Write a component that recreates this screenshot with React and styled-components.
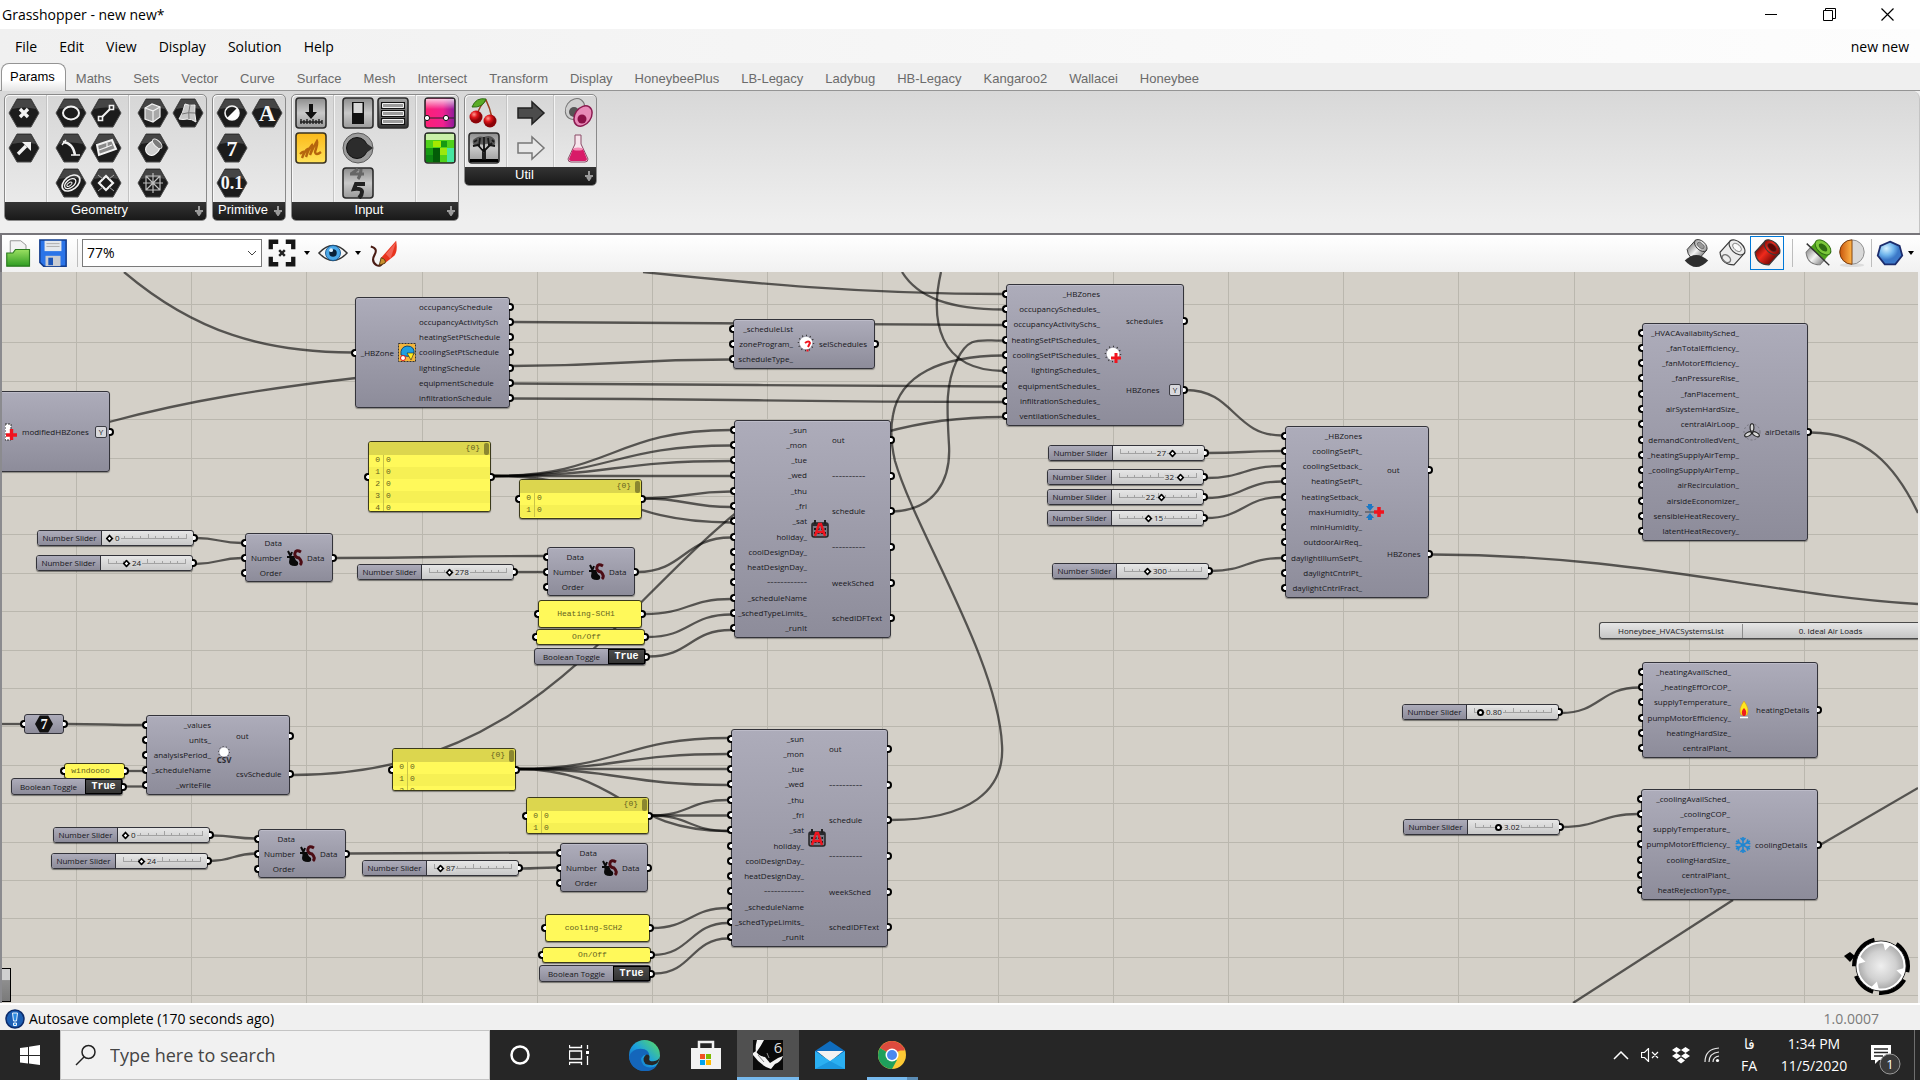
import React from "react";
import styled, { createGlobalStyle, css } from "styled-components";

const UI = '"Open Sans", "Noto Sans", sans-serif';
const ARIAL = '"Liberation Sans", Arial, sans-serif';
const MONO = '"Liberation Mono", "Courier New", monospace';
const WIRE = "rgba(0, 0, 0, 0.6)";

/* World position of the canvas viewport's top left corner. */
const ORIGIN = { x: 2, y: 272 };
const GRID = 1152 / 30;

const Global = createGlobalStyle`
  * { box-sizing: border-box; }
  body { margin: 0; font-family: ${UI}; color: #000; overflow: hidden; }
  button, input, select { font: inherit; color: inherit; margin: 0; }
  button { border: 0; background: none; padding: 0; }
  svg { display: block; }
`;

const Window = styled.div`
  display: flex;
  flex-direction: column;
  height: 100vh;
  background: #f0f0f0;
`;

/* ---------- title and menu ---------- */
const TitleBar = styled.header`
  display: flex;
  align-items: center;
  justify-content: space-between;
  height: 29px;
  padding: 0 4px 0 2px;
  background: #fff;
  font-size: 14px;
`;
const Title = styled.h1`
  margin: 0;
  font-size: 14px;
  font-weight: 400;
`;
const WindowButtons = styled.div`
  display: flex;
`;
const WindowButton = styled.button`
  display: grid;
  place-items: center;
  width: 58px;
  height: 29px;
`;
const MenuBar = styled.nav`
  display: flex;
  align-items: center;
  height: 34px;
  padding: 0 11px 0 4px;
  background: linear-gradient(90deg, #f0f0f0, #fdfdfd);
  font-size: 14px;
`;
const MenuItem = styled.button`
  padding: 0 11px;
`;
const DocumentButton = styled.button`
  margin-left: auto;
`;

/* ---------- ribbon ---------- */
const TabRow = styled.div`
  display: flex;
  align-items: flex-end;
  height: 28px;
  padding-left: 1px;
  background: #efefef;
  border-bottom: 1px solid #949494;
  font-family: ${ARIAL};
  font-size: 13px;
`;
const Tab = styled.button`
  height: 26px;
  padding: 2px 12px 0 10px;
  color: #6b6b6b;
  ${(p) =>
    p.$active &&
    css`
      height: 28px;
      margin-bottom: -1px;
      padding: 0 10px 2px 8px;
      color: #000;
      background: linear-gradient(#fff 60%, #e4e4e4);
      border: 1px solid #949494;
      border-bottom: 0;
      border-radius: 8px 8px 0 0;
    `}
`;
const Ribbon = styled.section`
  display: flex;
  align-items: flex-start;
  gap: 5px;
  height: 142px;
  padding: 3px 0 0 4px;
  background: linear-gradient(#d8d8d8, #efefef 92%);
  border-right: 1px solid #c4c4c4;
  border-top-right-radius: 8px;
`;
const Group = styled.div`
  display: flex;
  flex-direction: column;
  background: linear-gradient(#d6d6d6, #ededed);
  border: 1px solid #8a8a8a;
  border-radius: 5px;
  box-shadow: inset 1px 1px 0 #f8f8f8;
  overflow: hidden;
`;
const GroupBody = styled.div`
  display: flex;
  padding: 0 1px;
`;
const IconGrid = styled.div`
  display: grid;
  grid-template-columns: repeat(${(p) => p.$cols}, 35px);
  grid-auto-rows: 35px;
  min-height: ${(p) => p.$rows * 35 + 2}px;
  align-content: start;
  & + & {
    margin-left: 5px;
    padding-left: 6px;
    border-left: 1px solid #c4c4c4;
    box-shadow: inset 1px 0 0 #f4f4f4;
  }
`;
const IconButton = styled.button`
  display: grid;
  place-items: center;
  grid-column: ${(p) => p.$col || "auto"};
`;
const GroupTitle = styled.div`
  position: relative;
  height: 18px;
  background: linear-gradient(#343434, #191919);
  color: #fff;
  font-family: ${ARIAL};
  font-size: 13px;
  line-height: 16px;
  text-align: center;
  padding-right: 12px;
  svg {
    position: absolute;
    right: 2px;
    top: 4px;
  }
`;

/* ---------- canvas toolbar ---------- */
const Toolbar = styled.div`
  display: flex;
  align-items: center;
  height: 39px;
  padding: 0 4px 2px 2px;
  background: linear-gradient(#fff, #f1f1f1);
  border-top: 2px solid #77757a;
  border-left: 2px solid #77757a;
`;
const Tool = styled.button`
  display: grid;
  place-items: center;
  width: ${(p) => p.$w || 34}px;
  height: 34px;
  border: 1px solid ${(p) => (p.$active ? "#0078d7" : "transparent")};
`;
const Divider = styled.span`
  width: 1px;
  height: 28px;
  margin: 0 ${(p) => p.$gap || 4}px;
  background: #bdbdbd;
`;
const Spacer = styled.span`
  flex: 1;
`;
const ZoomBox = styled.label`
  position: relative;
  display: block;
  svg {
    position: absolute;
    right: 5px;
    top: 11px;
    pointer-events: none;
  }
`;
const ZoomSelect = styled.select`
  display: block;
  appearance: none;
  width: 180px;
  height: 28px;
  padding: 0 4px;
  border: 1px solid #7a7a7a;
  border-radius: 0;
  background: #fff;
  font-size: 14px;
`;

/* ---------- canvas ---------- */
const Canvas = styled.main`
  position: relative;
  flex: 1;
  min-height: 0;
  margin-right: 2px;
  overflow: hidden;
  background: #d4d0c8;
  border-left: 2px solid #8b8b8f;
`;
const Wires = styled.svg`
  position: absolute;
  inset: 0;
  width: 100%;
  height: 100%;
`;
const place = css`
  position: absolute;
  left: ${(p) => p.$x - ORIGIN.x}px;
  top: ${(p) => p.$y - ORIGIN.y}px;
  width: ${(p) => p.$w}px;
  height: ${(p) => p.$h}px;
`;
const NodeBox = styled.section`
  ${place}
  display: flex;
  padding: 1px 0;
  border: 1px solid #33333a;
  border-radius: 3px;
  background: linear-gradient(#adacba, #8d8c9a);
  box-shadow: inset 0 1px 0 #bcbbc8, 0 1px 1px rgba(0, 0, 0, 0.35);
  font-size: 8px;
  line-height: 10px;
  color: #17171b;
`;
const Column = styled.div`
  display: flex;
  flex-direction: column;
  width: ${(p) => p.$w}px;
  flex: ${(p) => (p.$w ? "none" : 1)};
`;
const Slot = styled.div`
  position: relative;
  flex: 1;
  display: flex;
  align-items: center;
  justify-content: ${(p) => (p.$side === "in" ? "flex-end" : "flex-start")};
  white-space: nowrap;
  ${(p) =>
    p.$rule &&
    css`
      font-family: ${ARIAL};
      font-size: 10px;
      color: #44444c;
    `}
`;
const Port = styled.span`
  position: absolute;
  top: 50%;
  width: 5px;
  height: 8px;
  margin-top: -4px;
  background: #fff;
  border: 2px solid #000;
  ${(p) =>
    p.$side === "in"
      ? css`
          left: -5px;
          border-right: 0;
          border-radius: 4px 0 0 4px;
        `
      : css`
          right: -5px;
          border-left: 0;
          border-radius: 0 4px 4px 0;
        `}
`;
const NodeIcon = styled.div`
  display: grid;
  place-items: center;
  width: ${(p) => p.$w}px;
`;
const Flag = styled.span`
  display: grid;
  place-items: center;
  width: 12px;
  height: 12px;
  margin: 0 2px 0 auto;
  border: 1px solid #3c3c44;
  border-radius: 2px;
  background: #d8d8dc;
  font-size: 8px;
  line-height: 8px;
`;

const SliderBox = styled.label`
  ${place}
  display: flex;
  border: 1px solid #33333a;
  border-radius: 3px;
  background: linear-gradient(#e6e6e6, #c9c9c9);
  box-shadow: 0 1px 1px rgba(0, 0, 0, 0.45);
  font-size: 8px;
  line-height: 14px;
  color: #17171b;
`;
const PartName = styled.span`
  width: ${(p) => p.$w}px;
  border-right: 1px solid #33333a;
  border-radius: 2px 0 0 2px;
  background: linear-gradient(#adacba, #8d8c9a);
  text-align: center;
  white-space: nowrap;
`;
const Track = styled.span`
  position: relative;
  width: 84px;
  margin-left: 4px;
  svg {
    position: absolute;
    left: 3px;
    top: 2px;
  }
`;
const Range = styled.input`
  position: absolute;
  inset: 0;
  width: 84px;
  height: 14px;
  appearance: none;
  background: none;
  &::-webkit-slider-thumb {
    appearance: none;
    width: 7px;
    height: 7px;
    background: #fff;
    border: 2px solid #000;
    border-radius: ${(p) => (p.$round ? "50%" : "1px")};
    transform: ${(p) => (p.$round ? "none" : "rotate(45deg) scale(0.8)")};
  }
`;
const Readout = styled.output`
  position: absolute;
  top: 0;
  padding: 0 1px;
  background: linear-gradient(transparent 3px, #dadada 3px, #d4d4d4 11px, transparent 11px);
`;

const NoteBox = styled.section`
  ${place}
  border: 1px solid #3b3a1c;
  border-radius: 3px;
  background: #fff95a;
  box-shadow: 0 1px 1px rgba(0, 0, 0, 0.4);
  font-family: ${MONO};
  font-size: 8px;
  color: #64621f;
`;
const NoteText = styled.p`
  display: grid;
  place-items: center;
  height: 100%;
  margin: 0;
  padding: 0 8px 2px 0;
`;
const NoteClip = styled.div`
  height: 100%;
  overflow: hidden;
  border-radius: 2px;
`;
const NoteHead = styled.div`
  display: flex;
  justify-content: flex-end;
  height: 13px;
  padding-right: 1px;
  line-height: 12px;
  background: #dcd64e;
`;
const NoteScroll = styled.span`
  width: 5px;
  height: 12px;
  margin: 1px 0 0 4px;
  border-radius: 2px;
  background: #8b8730;
`;
const NoteRow = styled.div`
  display: flex;
  height: 12px;
  line-height: 10px;
  background: ${(p) => (p.$odd ? "#f6f054" : "#fff95a")};
`;
const NoteIndex = styled.span`
  width: 15px;
  padding-right: 3px;
  margin-right: 2px;
  border-right: 1px solid #c9c348;
  text-align: right;
`;

const ToggleBox = styled.label`
  ${place}
  display: flex;
  border: 1px solid #33333a;
  border-radius: 3px;
  background: linear-gradient(#adacba, #8d8c9a);
  box-shadow: 0 1px 1px rgba(0, 0, 0, 0.45);
  font-size: 8px;
  line-height: 15px;
  color: #17171b;
`;
const ToggleName = styled.span`
  flex: 1;
  text-align: center;
  white-space: nowrap;
`;
const ToggleButton = styled.button`
  width: 37px;
  border: 1px solid #000;
  background: linear-gradient(#4c4c4c, #333);
  font-family: ${MONO};
  font-weight: 700;
  font-size: 10px;
  line-height: 11px;
  color: #fff;
`;
const ListBox = styled.label`
  ${place}
  display: flex;
  align-items: center;
  border: 1px solid #4a4a4a;
  border-right: 0;
  border-radius: 3px 0 0 3px;
  background: linear-gradient(#e6e6e6, #c6c6c6);
  box-shadow: 0 1px 1px rgba(0, 0, 0, 0.45);
  font-size: 8px;
  color: #17171b;
`;
const ListName = styled.span`
  width: 143px;
  text-align: center;
  border-right: 1px solid #8c8c8c;
  line-height: 14px;
`;
const ListSelect = styled.select`
  appearance: none;
  flex: 1;
  border: 0;
  background: none;
  text-align: center;
  text-align-last: center;
`;
const ParamBox = styled.section`
  ${place}
  display: grid;
  place-items: center;
  border: 1px solid #33333a;
  border-radius: 3px;
  background: linear-gradient(#adacba, #8d8c9a);
`;
const CornerTab = styled.div`
  ${place}
  border: 1px solid #000;
  background: linear-gradient(#d0d0d0 35%, #8e8e8e 36%, #7a7a7a);
`;
const Compass = styled.svg`
  position: absolute;
  right: 7px;
  bottom: 6px;
`;

/* ---------- status bar and taskbar ---------- */
const StatusBar = styled.footer`
  display: flex;
  align-items: center;
  height: 27px;
  padding: 2px 41px 0 5px;
  gap: 4px;
  background: #f0f0f0;
  border-top: 2px solid #fff;
  font-size: 14px;
`;
const Version = styled.span`
  margin-left: auto;
  color: #7b7b7b;
`;
const Taskbar = styled.footer`
  display: flex;
  height: 50px;
  background: #262626;
  color: #fff;
`;
const TaskButton = styled.button`
  position: relative;
  display: grid;
  place-items: center;
  width: ${(p) => p.$w || 62}px;
  margin-left: ${(p) => p.$gap || 0}px;
  background: ${(p) => (p.$active ? "#505050" : "none")};
  border-bottom: ${(p) => (p.$active ? "3px solid #76b9ed" : "0")};
  padding-top: ${(p) => (p.$active ? 3 : 0)}px;
`;
const NoticeButton = styled.button`
  display: flex;
  align-items: center;
  width: 52px;
  margin-left: 6px;
  padding: 8px 0 0 7px;
`;
const RunningMark = styled.span`
  position: absolute;
  left: 6px;
  bottom: 0;
  width: 51px;
  height: 3px;
  background: linear-gradient(90deg, #76b9ed 40px, #5a8bb3 40px);
`;
const Search = styled.label`
  display: flex;
  align-items: center;
  gap: 13px;
  width: 430px;
  padding-left: 14px;
  background: #f1f1f1;
  border: 1px solid #c4c4c4;
`;
const SearchInput = styled.input`
  flex: 1;
  min-width: 0;
  padding: 0;
  border: 0;
  background: none;
  font-size: 18px;
  outline: 0;
  &::placeholder {
    color: #444;
    opacity: 1;
  }
`;
const TrayText = styled.div`
  display: flex;
  flex-direction: column;
  justify-content: center;
  width: ${(p) => p.$w}px;
  margin-left: ${(p) => p.$gap}px;
  text-align: center;
  font-size: 14px;
  line-height: 22px;
`;
const ShowDesktop = styled.button`
  width: 6px;
  border-left: 1px solid #6e6e6e;
`;

/* ---------- drawings ---------- */
const Hex = ({ children }) => (
  <svg width="32" height="30" viewBox="0 0 32 30" aria-hidden="true">
    <path d="M9 1h14l8 14-8 14H9L1 15z" fill="#1c1c1c" stroke="#4a4a4a" />
    <path d="M9 2h14l5 9Q16 8 4 11z" fill="#454545" />
    <g fill="none" stroke="#f2f2f2" strokeWidth="2">
      {children}
    </g>
  </svg>
);
const HexText = ({ size, children }) => (
  <text x="16" y={15 + size * 0.36} fontSize={size} fill="#f6f6f6" stroke="none" textAnchor="middle" fontFamily="Liberation Serif, serif" fontWeight="700">
    {children}
  </text>
);
const Tile = ({ fill = "url(#tileGrey)", stroke = "#2c2c2c", children }) => (
  <svg width="32" height="32" viewBox="0 0 32 32" aria-hidden="true">
    <rect x="1" y="1" width="30" height="30" rx="3" fill={fill} stroke={stroke} strokeWidth="1.6" />
    {children}
  </svg>
);
const Plain = ({ size = 32, children }) => (
  <svg width={size} height={size} viewBox="0 0 32 32" aria-hidden="true">
    {children}
  </svg>
);
const Defs = () => (
  <svg width="0" height="0" style={{ position: "absolute" }} aria-hidden="true">
    <defs>
      <linearGradient id="tileGrey" x2="0" y2="1"><stop stopColor="#8d8d8d" /><stop offset=".5" stopColor="#c9c9c9" /><stop offset="1" stopColor="#9a9a9a" /></linearGradient>
      <linearGradient id="tileDark" x2="0" y2="1"><stop stopColor="#a8a8a8" /><stop offset="1" stopColor="#333" /></linearGradient>
      <linearGradient id="tileGold" x2="0" y2="1"><stop stopColor="#fbb919" /><stop offset="1" stopColor="#ffe259" /></linearGradient>
      <linearGradient id="tilePink"><stop stopColor="#ff1f74" /><stop offset=".6" stopColor="#f0218f" /><stop offset="1" stopColor="#8a1a9c" /></linearGradient>
      <linearGradient id="pinkFade" x2="0" y2="1"><stop stopColor="#fff" stopOpacity=".75" /><stop offset=".6" stopColor="#fff" stopOpacity="0" /></linearGradient>
      <linearGradient id="folder" x2="0" y2="1"><stop stopColor="#9be062" /><stop offset="1" stopColor="#2f9c22" /></linearGradient>
      <linearGradient id="silver"><stop stopColor="#9a9a9a" /><stop offset=".5" stopColor="#f4f4f4" /><stop offset="1" stopColor="#8f8f8f" /></linearGradient>
      <linearGradient id="redCyl"><stop stopColor="#8c0e08" /><stop offset=".4" stopColor="#f02a1c" /><stop offset="1" stopColor="#7c0805" /></linearGradient>
      <radialGradient id="cherry" cx=".35" cy=".3"><stop stopColor="#ff9a90" /><stop offset=".5" stopColor="#e0161a" /><stop offset="1" stopColor="#8c0308" /></radialGradient>
      <radialGradient id="gem" cx=".35" cy=".3"><stop stopColor="#d6f2ff" /><stop offset=".6" stopColor="#6fb4ec" /><stop offset="1" stopColor="#3b78c8" /></radialGradient>
      <radialGradient id="knob"><stop stopColor="#efefef" /><stop offset=".6" stopColor="#d0d0d0" /><stop offset="1" stopColor="#a2a2a2" /></radialGradient>
      <linearGradient id="edge" x1="0" y1="1" x2="1" y2="0"><stop stopColor="#0f5fb8" /><stop offset=".5" stopColor="#1ba0e0" /><stop offset="1" stopColor="#5fe05a" /></linearGradient>
      <linearGradient id="orange"><stop stopColor="#c9560c" /><stop offset="1" stopColor="#ffb64a" /></linearGradient>
    </defs>
  </svg>
);

const ribbonIcons = {
  point: <Hex><path d="M12 11l8 8M20 11l-8 8" strokeWidth="3.4" /></Hex>,
  vector: <Hex><path d="M10 21l8-8" strokeWidth="3.4" /><path d="M14 9h9v9z" fill="#f2f2f2" stroke="none" /></Hex>,
  circle: <Hex><ellipse cx="16" cy="15" rx="8" ry="6.5" /></Hex>,
  line: <Hex><path d="M12 19l8-8" /><path d="M8.500 18.500h4v4h-4zM19.500 7.500h4v4h-4z" strokeWidth="1.600" fill="#222" /></Hex>,
  arc: <Hex><path d="M8 9q10 1 12 13" strokeWidth="2.400" /><path d="M16 22h9M7 12l4-5" strokeWidth="1.400" /></Hex>,
  plane: <Hex><path d="M7 12l15-5 4 9-17 6z" fill="#8a8a8a" strokeWidth="2" /><path d="M9 17l8-3v-4M17 14l5-2" strokeWidth="1.200" /></Hex>,
  curve: <Hex><g transform="rotate(-38 16 15)"><ellipse cx="16" cy="15" rx="10" ry="6.500" strokeWidth="1.700" /><ellipse cx="15" cy="15" rx="6.500" ry="3.800" strokeWidth="1.300" /><ellipse cx="14" cy="15" rx="3" ry="1.400" strokeWidth="1" /></g></Hex>,
  rect: <Hex><path d="M16 8l7 7-7 7-7-7z" strokeWidth="2.200" /><path d="M8 7l5 4M24 7l-5 4M8 23l5-4M24 23l-5-4" strokeWidth="1" stroke="#aaa" /></Hex>,
  box: <Hex><path d="M8 10l7-4 8 3v10l-7 5-8-3z" fill="#a8a8a8" strokeWidth="1.200" /><path d="M8 10l8 3v11M16 13l7-4" strokeWidth="1.200" /></Hex>,
  surface: <Hex><path d="M13 6q4 2 10 1-1 8 1 17-4-3-9-3-4 1-8 0 4-6 6-15z" fill="#c8c8c8" strokeWidth="1" /><path d="M18 7q-2 8-1 14M10 16q6-2 13-1" stroke="#777" strokeWidth="1" /></Hex>,
  brep: <Hex><g transform="rotate(45 16 15)"><rect x="10" y="8" width="12" height="15" rx="6" fill="#cfcfcf" stroke="#fff" strokeWidth="1" /><ellipse cx="16" cy="9" rx="6" ry="3" fill="#7a7a7a" strokeWidth="1" /></g></Hex>,
  mesh: <Hex><path d="M9 8h14v14H9zM16 5v20M6 15h20M9 8l14 14M23 8L9 22" stroke="#bdbdbd" strokeWidth="1.200" /></Hex>,
  bool: <Hex><circle cx="16" cy="15" r="7" strokeWidth="1.600" /><path d="M21 10a7 7 0 0 1-10 10z" fill="#fff" stroke="none" /></Hex>,
  text: <Hex><HexText size={23}>A</HexText></Hex>,
  int: <Hex><HexText size={22}>7</HexText></Hex>,
  num: <Hex><HexText size={18}>0.1</HexText></Hex>,
  slider: <Tile><path d="M14 7h4v8h4l-6 7-6-7h4z" fill="#111" /><path d="M5 25h22M6 22v5M9 23v4M12 22v5M15 23v4M18 22v5M21 23v4M24 22v5M27 23v4" stroke="#222" strokeWidth="1.400" /></Tile>,
  scribble: <Tile fill="url(#tileGold)" stroke="#3a3320"><path d="M5 22q3-3 4-2 0 2-2 6 3-8 6-9 0 3-2 8 3-9 6-12 1 2-2 10 4-9 7-14 1 2-2 11 1 4 6 0" fill="none" stroke="#b5650e" strokeWidth="2.400" /></Tile>,
  toggle: <Tile><rect x="10" y="5" width="12" height="22" fill="#111" /><rect x="11.500" y="6" width="9" height="10" fill="#d8d8d8" /></Tile>,
  list: <Tile fill="url(#tileDark)"><path d="M5.500 6.500h21v4h-21zM5.500 14.500h21v4h-21zM5.500 22.500h21v4h-21z" fill="#8a8a8a" stroke="#111" strokeWidth="3" /><path d="M5.500 6.500h21v4h-21zM5.500 14.500h21v4h-21zM5.500 22.500h21v4h-21z" fill="#9c9c9c" stroke="#f0f0f0" /></Tile>,
  knob: <Plain><circle cx="16" cy="16" r="15" fill="#9c9c9c" stroke="#5c5c5c" /><circle cx="15" cy="16" r="10.500" fill="#2c2c2c" stroke="#111" /><path d="M24 11l7 5-7 5z" fill="#2c2c2c" /></Plain>,
  scroller: <Tile><path d="M19 2q0 6-3 10M8 7h14M9 7l7-5" fill="none" stroke="#666" strokeWidth="3" /><path d="M23 17h-9l-2 5q8-1 8 3 0 3-3 6" fill="none" stroke="#222" strokeWidth="4" /></Tile>,
  gradient: <Tile fill="url(#tilePink)"><rect x="2" y="2" width="28" height="17" fill="url(#pinkFade)" /><path d="M2 21h28" stroke="#222" strokeWidth="1.200" /><circle cx="3" cy="21" r="2.600" fill="#fff" stroke="#111" /><circle cx="22" cy="21" r="2.600" fill="#fff" stroke="#111" /></Tile>,
  swatch: <Tile fill="#4fd21a"><path d="M2 2h28v6H2z" fill="#c9f0a8" /><path d="M9 9h8v6H9z" fill="#a5e800" /><path d="M2 16h7v7H2zM17 9h6v6h-6z" fill="#169a12" /><path d="M9 16h7v7H9zM9 23h7v7H9z" fill="#035c08" /><path d="M16 16h7v7h-7z" fill="#9be80e" /><path d="M23 16h7v14h-7z" fill="#46e6a0" /><path d="M2 23h7v7H2z" fill="#0c8212" /></Tile>,
  cherry: <Plain><path d="M9 18Q12 8 18 3q4 8 6 18" fill="none" stroke="#9a4020" strokeWidth="1.600" /><path d="M4 10Q8 0 18 2q-3 9-14 8z" fill="#5aac26" stroke="#2c6b12" /><circle cx="8" cy="20" r="6.500" fill="url(#cherry)" /><circle cx="22" cy="24" r="6.500" fill="url(#cherry)" /></Plain>,
  tree: <Tile><path d="M2 27h28v3H2z" fill="#000" /><path d="M15 28V17M17 28V17M16 20l-7-8M16 19l8-8M16 18V5M10 13l-5 1M11 14l1-8M22 13l5 1M21 13l-1-7M9 8l-3 2M24 8l2 2" stroke="#111" strokeWidth="1.800" fill="none" /><path d="M5 8q5-5 11-3 7-3 11 3 1 6-3 6-4-4-8-1-5-2-9 1-3-2-2-6z" fill="#222" opacity=".6" /></Tile>,
  arrowDark: <Plain><path d="M3 11h14V5l12 11-12 11v-6H3z" fill="#4c4c4c" stroke="#222" strokeWidth="1.500" /></Plain>,
  arrowLight: <Plain><path d="M3 11h14V5l12 11-12 11v-6H3z" fill="#e8e8e8" stroke="#777" strokeWidth="1.500" /></Plain>,
  galapagos: <Plain><ellipse cx="13" cy="12" rx="9" ry="11" fill="#cfcfcf" stroke="#777" transform="rotate(35 13 12)" /><circle cx="12" cy="15" r="5" fill="#555" /><ellipse cx="21" cy="19" rx="8" ry="11" fill="#e88ab8" stroke="#8c1b50" strokeWidth="1.500" transform="rotate(35 21 19)" /><circle cx="20" cy="22" r="4.500" fill="#8c1048" /></Plain>,
  flask: <Plain><path d="M13 3h6v9l7 15q0 3-3 3H9q-3 0-3-3l7-15z" fill="#f6e4ec" stroke="#8a4a66" /><path d="M11 17h10l4 10q0 2-2 2H9q-2 0-2-2z" fill="#d81b68" /><ellipse cx="16" cy="17" rx="5" ry="1.600" fill="#f58ab4" /></Plain>,
};

const Cylinder = ({ fill, inner }) => (
  <g transform="rotate(42 16 16)">
    <path d="M6 7v17q10 9 20 0V7z" fill={fill} stroke="#3a3a3a" strokeWidth="1.200" />
    <ellipse cx="16" cy="8" rx="10" ry="6" fill={fill} stroke="#3a3a3a" strokeWidth="1.200" />
    <ellipse cx="16" cy="8" rx="5.500" ry="3.200" fill={inner} stroke="#3a3a3a" strokeWidth=".6" />
  </g>
);
const tools = {
  open: <Plain size={28}><path d="M6 2h12l6 5v14H6z" fill="#f2f2f2" stroke="#888" /><path d="M2 16h7l3-4h16v19H2z" fill="url(#folder)" stroke="#2a7a1e" strokeWidth="1.300" /></Plain>,
  save: <Plain size={30}><path d="M2 2h28v28H6l-4-4z" fill="#2b74e8" stroke="#123c8c" strokeWidth="1.600" /><path d="M7 3h18v11H7z" fill="#e4e8ec" /><path d="M9 6h14M9 9h14" stroke="#aaa" /><path d="M8 19h16v11H8z" fill="#c9ccd2" /><path d="M11 21h5v8h-5z" fill="#1c55b8" /></Plain>,
  extents: <Plain size={30}><path d="M4 12V4h8M20 4h8v8M28 20v8h-8M12 28H4v-8" fill="none" stroke="#161616" strokeWidth="4.600" /><path d="M13 13l6 6M19 13l-6 6" stroke="#222" strokeWidth="2.600" /></Plain>,
  eye: <Plain size={30}><path d="M1 16Q16 0 31 16 16 32 1 16z" fill="#f4f4f4" stroke="#333" strokeWidth="1.600" /><circle cx="16" cy="16" r="8" fill="#4aa8e8" stroke="#1b5c94" /><circle cx="16" cy="16" r="4" fill="#0a2238" /><circle cx="14" cy="13" r="2" fill="#dff2ff" /></Plain>,
  sketch: <Plain size={30}><path d="M3 9q8 2 4 9t2 11q4 2 7-3" fill="none" stroke="#4a1c14" strokeWidth="2.200" /><path d="M14 21L30 3q2 11-2 16L18 27z" fill="#e8341e" /><path d="M19 17L30 4l-6 18z" fill="#f8827a" opacity=".6" /><path d="M14 21l-2 8 6-2q2-4-4-6z" fill="#c9902c" stroke="#5c3a10" /></Plain>,
  noPreview: <Plain size={30}><g transform="translate(4 0) scale(.8)"><Cylinder fill="url(#silver)" inner="#999" /></g><path d="M4 24Q16 12 29 24 16 38 4 24z" fill="#2e2e2e" /></Plain>,
  wirePreview: <Plain size={30}><Cylinder fill="#ececec" inner="#fafafa" /><ellipse cx="10" cy="22" rx="5" ry="3.500" transform="rotate(42 10 22)" fill="none" stroke="#777" strokeWidth="1.500" /></Plain>,
  shaded: <Plain size={30}><Cylinder fill="url(#redCyl)" inner="#5c0503" /></Plain>,
  selected: <Plain size={30}><g transform="rotate(42 16 16)"><path d="M6 16v8q10 9 20 0v-8z" fill="url(#silver)" stroke="#777" /><path d="M6 8v9h20V8z" fill="#4fa01c" /><ellipse cx="16" cy="8" rx="10" ry="6" fill="#7cc93a" stroke="#2c6b10" /><ellipse cx="16" cy="8" rx="5.500" ry="3" fill="#2c6b10" /></g><path d="M4 6l24 23" stroke="#333" strokeWidth="1.500" /></Plain>,
  sphere: <Plain size={30}><ellipse cx="16" cy="29" rx="13" ry="2" fill="#ddd" /><circle cx="16" cy="15" r="13" fill="#d9d9d9" stroke="#8a8a8a" /><path d="M16 2a13 13 0 0 0 0 26z" fill="url(#orange)" stroke="#7c3a08" /></Plain>,
  gem: <Plain size={28}><path d="M16 3l11 5 3 11-8 10H10L2 19 5 8z" fill="url(#gem)" stroke="#1c2c6c" strokeWidth="2" /></Plain>,
  caret: <svg width="6" height="4" aria-hidden="true"><path d="M0 0h6L3 4z" /></svg>,
};

const Clock = ({ children }) => (
  <svg width="18" height="20" viewBox="0 0 18 20" aria-hidden="true">
    <circle cx="9" cy="9" r="7.500" fill="none" stroke="#333" strokeWidth="1.500" strokeDasharray="1 2.900" />
    <circle cx="9" cy="9" r="6.300" fill="#fff" />
    {children}
  </svg>
);
const nodeIcons = {
  zone: <svg width="18" height="19" viewBox="0 0 18 19"><path d="M.5.5h17v18H.5z" fill="#f4b53a" stroke="#333" strokeDasharray="2 1" /><path d="M3 12Q2 4 9 3q8 0 7 8-4 4-13 1z" fill="#1f9fe0" stroke="#0a4a78" /><path d="M9 10h7l-3 7z" fill="#ffee20" stroke="#222" strokeWidth=".6" /><circle cx="5" cy="15" r="2.500" fill="#fff" stroke="#e01818" /></svg>,
  ask: <Clock><path d="M8 9q4-3 5 0-1 2-2 4M10.500 15.500v2" fill="none" stroke="#f0141e" strokeWidth="2" /></Clock>,
  add: <Clock><path d="M12 8v10M7 13h10" stroke="#f0141e" strokeWidth="3" /></Clock>,
  edge: <svg width="12" height="18" viewBox="0 0 12 18"><path d="M0 1h6v16H0z" fill="#fff" stroke="#333" strokeDasharray="2 1" /><path d="M6.500 6v11M1 12h11" stroke="#f0141e" strokeWidth="3.400" /></svg>,
  calendar: <svg width="18" height="18" viewBox="0 0 18 18"><rect x="1" y="3" width="16" height="14" rx="2" fill="#777782" stroke="#222" strokeWidth="1.500" /><path d="M1 3h16v3H1z" fill="#2a2a2e" /><path d="M4 0v4M14 0v4" stroke="#222" strokeWidth="2" /><path d="M3 9h12M3 13h12" stroke="#1c1c1c" strokeWidth="2" strokeDasharray="2 1.500" /><path d="M4 16L8 4h2l4 12M6 12h6" fill="none" stroke="#f0141e" strokeWidth="2.400" /></svg>,
  humid: <svg width="20" height="16" viewBox="0 0 20 16"><path d="M1 2h2V0h4v2h2L5 7zM1 14h2v2h4v-2h2L5 9z" fill="#1b78c4" /><path d="M0 8h9" stroke="#444" /><path d="M14 3v10M9 8h10" stroke="#f0141e" strokeWidth="3.500" /></svg>,
  fan: <svg width="18" height="18" viewBox="0 0 18 18"><circle cx="9" cy="9" r="8" fill="none" stroke="#77757f" strokeDasharray="2 2" /><g fill="#d8d8d8" stroke="#222" strokeWidth="1.100">{[0, 120, 240].map((a) => <ellipse key={a} cx="9" cy="4.500" rx="1.900" ry="3.800" transform={`rotate(${a} 9 9)`} />)}</g></svg>,
  flame: <svg width="12" height="18" viewBox="0 0 12 18"><path d="M6 0q6 8 3 14H3Q0 8 6 0z" fill="#ffe81c" stroke="#d9981a" strokeWidth=".6" /><path d="M6 7q4 4 1 8H5q-3-4 1-8z" fill="#ee1c1c" /><path d="M2 16.500h8" stroke="#fff" strokeWidth="1.500" /></svg>,
  snow: <svg width="18" height="18" viewBox="0 0 18 18"><g stroke="#1e86d2" strokeWidth="1.600" fill="none">{[0, 60, 120, 180, 240, 300].map((a) => <path key={a} d="M9 9V1M6.500 2l2.500 2.500L11.500 2" transform={`rotate(${a} 9 9)`} />)}</g></svg>,
  csv: <svg width="20" height="22" viewBox="0 0 20 22"><circle cx="10" cy="8" r="5.500" fill="none" stroke="#333" strokeDasharray="1 2.400" /><circle cx="10" cy="8" r="4.600" fill="#fff" /><text x="10" y="19" fontSize="8" fontWeight="700" fill="#2c2c32" textAnchor="middle" fontFamily="Open Sans, sans-serif">CSV</text></svg>,
  shift: <svg width="18" height="18" viewBox="0 0 18 18"><path d="M15 3Q10 0 9 4t4 5q4 4 1 7" fill="none" stroke="#4c0c14" strokeWidth="3" /><path d="M2 2l3 6M6 3L4 8M1 8h6" stroke="#0a0a0a" strokeWidth="2" /><path d="M3 7h5q1 4 4 6 1 4-3 4-6 0-6-4 1-3 0-6z" fill="#0a0a0a" /></svg>,
};

/* ---------- data ---------- */
const menus = ["File", "Edit", "View", "Display", "Solution", "Help"];
const tabs = ["Params", "Maths", "Sets", "Vector", "Curve", "Surface", "Mesh", "Intersect", "Transform", "Display", "HoneybeePlus", "LB-Legacy", "Ladybug", "HB-Legacy", "Kangaroo2", "Wallacei", "Honeybee"];
/* Each block is a list of icon rows. */
const groups = [
  { name: "Geometry", rows: 3, blocks: [[["point"], ["vector"]], [["circle", "line"], ["arc", "plane"], ["curve", "rect"]], [["box", "surface"], ["brep"], ["mesh"]]] },
  { name: "Primitive", rows: 3, blocks: [[["bool", "text"], ["int"], ["num"]]] },
  { name: "Input", rows: 3, blocks: [[["slider"], ["scribble"]], [["toggle", "list"], ["knob"], ["scroller"]], [["gradient"], ["swatch"]]] },
  { name: "Util", rows: 2, blocks: [[["cherry"], ["tree"]], [["arrowDark"], ["arrowLight"]], [["galapagos"], ["flask"]]] },
];

const dayInputs = ["_sun", "_mon", "_tue", "_wed", "_thu", "_fri", "_sat", "holiday_", "coolDesignDay_", "heatDesignDay_", "------------", "_scheduleName", "_schedTypeLimits_", "_runIt"];
const dayOutputs = ["out", "----------", "schedule", "----------", "weekSched", "schedIDFText"];
const shiftNode = { w: 88, h: 49, inW: 36, iconW: 25, icon: "shift", ins: ["Data", "Number", "Order"], outs: ["Data"] };
const nodes = [
  { x: -40, y: 391, w: 150, h: 81, inW: 39, iconW: 22, icon: "edge", ins: [], outs: ["modifiedHBZones"], flag: "modifiedHBZones" },
  { x: 355, y: 297, w: 155, h: 111, inW: 38, iconW: 25, icon: "zone", ins: ["_HBZone"], outs: ["occupancySchedule", "occupancyActivitySch", "heatingSetPtSchedule", "coolingSetPtSchedule", "lightingSchedule", "equipmentSchedule", "infiltrationSchedule"] },
  { x: 733, y: 319, w: 142, h: 50, inW: 59, iconW: 26, icon: "ask", ins: ["_scheduleList", "zoneProgram_", "scheduleType_"], outs: ["selSchedules"] },
  { x: 734, y: 420, w: 157, h: 218, inW: 72, iconW: 25, icon: "calendar", ins: dayInputs, outs: dayOutputs },
  { x: 731, y: 729, w: 157, h: 218, inW: 72, iconW: 25, icon: "calendar", ins: dayInputs, outs: dayOutputs },
  { x: 1006, y: 284, w: 178, h: 142, inW: 93, iconW: 26, icon: "add", ins: ["_HBZones", "occupancySchedules_", "occupancyActivitySchs_", "heatingSetPtSchedules_", "coolingSetPtSchedules_", "lightingSchedules_", "equipmentSchedules_", "infiltrationSchedules_", "ventilationSchedules_"], outs: ["schedules", "HBZones"], flag: "HBZones" },
  { x: 1285, y: 426, w: 144, h: 172, inW: 76, iconW: 25, icon: "humid", ins: ["_HBZones", "coolingSetPt_", "coolingSetback_", "heatingSetPt_", "heatingSetback_", "maxHumidity_", "minHumidity_", "outdoorAirReq_", "daylightIllumSetPt_", "daylightCntrlPt_", "daylightCntrlFract_"], outs: ["out", "HBZones"] },
  { x: 1642, y: 323, w: 166, h: 218, inW: 96, iconW: 26, icon: "fan", ins: ["_HVACAvailabiltySched_", "_fanTotalEfficiency_", "_fanMotorEfficiency_", "_fanPressureRise_", "_fanPlacement_", "airSystemHardSize_", "centralAirLoop_", "demandControlledVent_", "_heatingSupplyAirTemp_", "_coolingSupplyAirTemp_", "airRecirculation_", "airsideEconomizer_", "sensibleHeatRecovery_", "latentHeatRecovery_"], outs: ["airDetails"] },
  { x: 1642, y: 662, w: 176, h: 96, inW: 88, iconW: 25, icon: "flame", ins: ["_heatingAvailSched_", "_heatingEffOrCOP_", "supplyTemperature_", "pumpMotorEfficiency_", "heatingHardSize_", "centralPlant_"], outs: ["heatingDetails"] },
  { x: 1641, y: 789, w: 177, h: 111, inW: 88, iconW: 25, icon: "snow", ins: ["_coolingAvailSched_", "_coolingCOP_", "supplyTemperature_", "pumpMotorEfficiency_", "coolingHardSize_", "centralPlant_", "heatRejectionType_"], outs: ["coolingDetails"] },
  { x: 146, y: 715, w: 144, h: 80, inW: 64, iconW: 25, icon: "csv", ins: ["_values", "units_", "analysisPeriod_", "_scheduleName", "_writeFile"], outs: ["out", "csvSchedule"] },
  { x: 245, y: 533, ...shiftNode },
  { x: 547, y: 547, ...shiftNode },
  { x: 258, y: 829, ...shiftNode },
  { x: 560, y: 843, ...shiftNode },
];

const sliders = [
  { x: 37, y: 530, at: 0, value: "0" },
  { x: 36, y: 555, at: 18, value: "24" },
  { x: 357, y: 564, at: 20, value: "278" },
  { x: 1048, y: 445, at: 52, value: "27", before: true },
  { x: 1047, y: 469, at: 61, value: "32", before: true },
  { x: 1047, y: 489, at: 42, value: "22", before: true },
  { x: 1047, y: 510, at: 29, value: "15" },
  { x: 1052, y: 563, at: 23, value: "300" },
  { x: 1402, y: 704, at: 6, value: "0.80", round: true },
  { x: 1403, y: 819, at: 23, value: "3.02", round: true },
  { x: 53, y: 827, at: 0, value: "0" },
  { x: 51, y: 853, at: 18, value: "24" },
  { x: 362, y: 860, at: 6, value: "87" },
];
const notes = [
  { x: 368, y: 441, w: 123, h: 71, rows: 5 },
  { x: 519, y: 479, w: 123, h: 40, rows: 2 },
  { x: 392, y: 748, w: 124, h: 43, rows: 3 },
  { x: 526, y: 797, w: 123, h: 37, rows: 2 },
  { x: 538, y: 600, w: 104, h: 28, text: "Heating-SCH1" },
  { x: 536, y: 629, w: 109, h: 16, text: "On/Off" },
  { x: 545, y: 914, w: 105, h: 28, text: "cooling-SCH2" },
  { x: 542, y: 947, w: 109, h: 16, text: "On/Off" },
  { x: 64, y: 763, w: 61, h: 16, text: "windoooo" },
];
const toggles = [
  { x: 534, y: 648 },
  { x: 539, y: 965 },
  { x: 11, y: 778 },
];

/* A wire leaves its source and enters its target horizontally. */
const link = (x1, y1, x2, y2) => {
  const m = (x1 + x2) / 2;
  return `M${x1} ${y1}C${m} ${y1} ${m} ${y2} ${x2} ${y2}`;
};
const wires = [
  "M124 272C196 333 265 352 352 352.500",
  "M109 422C190 400 270 388 356 378",
  link(512, 322, 1003, 325),
  link(512, 366, 730, 359.5),
  link(512, 383.5, 1003, 386.5),
  link(512, 398.5, 1003, 402),
  "M643 272C750 283 860 294 1003 294",
  "M902 272C918 298 950 309 1003 309.500",
  "M941 272C930 320 938 370 1003 371",
  "M893 511.500C935 510 951 480 949 445S945 385 957 360 980 341 1003 340.500",
  "M890 820C970 820 1005 790 1002 745C998 660 915 530 895 461C890 440 891 425 893 415C900 375 940 356 1003 355.500",
  link(292, 775, 1003, 417),
  link(1186, 390, 1282, 435.5),
  link(1207, 453, 1282, 451),
  link(1206, 478, 1282, 466),
  link(1206, 498, 1282, 481.5),
  link(1206, 518, 1282, 497),
  link(1211, 571, 1282, 558),
  "M1432 554.500C1640 555 1760 594 1918 604",
  "M1811 432.500C1865 433 1895 465 1918 513",
  link(1561, 713, 1639, 687.5),
  link(1562, 827, 1638, 814),
  "M1820 845L1918 788",
  "M1573 1003L1733 900",
  ...[430, 445.5, 461, 476].map((y) => link(494, 476, 731, y)),
  link(494, 476, 731, 522.5),
  link(644, 498.5, 731, 491.5),
  link(644, 498.5, 731, 507),
  link(637, 572, 731, 537.5),
  link(645, 614, 731, 599),
  link(648, 637, 731, 614.5),
  link(649, 656.5, 731, 630),
  link(335, 558, 543, 556),
  link(516, 572, 543, 572),
  link(196, 538, 242, 543),
  link(195, 564, 242, 558),
  ...[738, 754, 769, 785].map((y) => link(517, 769, 728, y)),
  link(517, 769, 728, 831),
  ...[800, 815.5, 831].map((y) => link(651, 815.5, 728, y)),
  link(652, 928, 728, 908),
  link(653, 955, 728, 923),
  link(655, 973.5, 728, 938.5),
  link(349, 853.5, 556, 852.5),
  link(521, 868.5, 556, 867.5),
  link(212, 835.5, 256, 838.5),
  link(210, 861, 256, 853.5),
  link(2, 724, 22, 724),
  link(66, 724, 144, 725),
  link(127, 771, 144, 771),
  link(126, 786.5, 144, 786.5),
];

/* ---------- parts ---------- */
const Node = ({ x, y, w, h, inW, iconW, icon, ins, outs, flag }) => (
  <NodeBox $x={x} $y={y} $w={w} $h={h}>
    <Column $w={inW}>
      {ins.map((label, i) => (
        <Slot key={i} $side="in" $rule={label.startsWith("---")}>
          <Port $side="in" />
          {label}
        </Slot>
      ))}
    </Column>
    <NodeIcon $w={iconW}>{nodeIcons[icon]}</NodeIcon>
    <Column>
      {outs.map((label, i) => (
        <Slot key={i} $side="out" $rule={label.startsWith("---")}>
          {label}
          {flag === label && <Flag>Y</Flag>}
          <Port $side="out" />
        </Slot>
      ))}
    </Column>
  </NodeBox>
);

const Slider = ({ x, y, at, value, before, round }) => (
  <SliderBox $x={x} $y={y} $w={157} $h={16}>
    <PartName $w={64}>Number Slider</PartName>
    <Track>
      <svg width="78" height="7" viewBox="0 0 78 7" aria-hidden="true">
        <path
          d={"M0 5.5H78" + Array.from({ length: 11 }, (_, i) => `M${Math.round(i * 7.7) + 0.5} ${i % 5 ? 3 : 1}V6`).join("")}
          stroke="#a2a2a2"
          fill="none"
        />
      </svg>
      <Readout style={before ? { right: 84 - at + 2 } : { left: at + 8 }}>{value}</Readout>
      <Range type="range" min="0" max="77" defaultValue={at} $round={round} />
    </Track>
    <Port $side="out" />
  </SliderBox>
);

const Note = ({ rows, text, ...box }) => (
  <NoteBox $x={box.x} $y={box.y} $w={box.w} $h={box.h}>
    <Port $side="in" />
    {text ? (
      <NoteText>{text}</NoteText>
    ) : (
      <NoteClip>
        <NoteHead>
          {"{0}"}
          <NoteScroll />
        </NoteHead>
        {Array.from({ length: rows }, (_, i) => (
          <NoteRow key={i} $odd={i % 2}>
            <NoteIndex>{i}</NoteIndex>0
          </NoteRow>
        ))}
      </NoteClip>
    )}
    <Port $side="out" />
  </NoteBox>
);

const Toggle = ({ x, y }) => (
  <ToggleBox $x={x} $y={y} $w={112} $h={17}>
    <ToggleName>Boolean Toggle</ToggleName>
    <ToggleButton type="button">True</ToggleButton>
    <Port $side="out" />
  </ToggleBox>
);

const gridLines = () => {
  let d = "";
  for (let i = 0; i < 30; i++) d += `M${Math.round(76 + i * GRID * 3) + 0.5} 0V2000`;
  for (let i = 0; i < 40; i++) d += `M0 ${Math.round(304 + i * GRID) + 0.5}H4000`;
  return d;
};

export default function App() {
  return (
    <Window>
      <Global />
      <Defs />
      <TitleBar>
        <Title>Grasshopper - new new*</Title>
        <WindowButtons>
          <WindowButton aria-label="Minimize"><svg width="12" height="12"><path d="M0 5.500h12" stroke="#000" /></svg></WindowButton>
          <WindowButton aria-label="Restore"><svg width="13" height="13"><path d="M.5 2.500h9v10h-9zM2.500 2V.5h10v10H10" fill="none" stroke="#000" /></svg></WindowButton>
          <WindowButton aria-label="Close"><svg width="13" height="13"><path d="M.5.5l12 12M12.500.5l-12 12" stroke="#000" strokeWidth="1.200" /></svg></WindowButton>
        </WindowButtons>
      </TitleBar>
      <MenuBar>
        {menus.map((m) => <MenuItem key={m}>{m}</MenuItem>)}
        <DocumentButton>new new</DocumentButton>
      </MenuBar>
      <TabRow role="tablist">
        {tabs.map((t, i) => (
          <Tab key={t + i} role="tab" aria-selected={i === 0} $active={i === 0}>{t}</Tab>
        ))}
      </TabRow>
      <Ribbon>
        {groups.map((g) => (
          <Group key={g.name}>
            <GroupBody>
              {g.blocks.map((rows, b) => (
                <IconGrid key={b} $cols={Math.max(...rows.map((r) => r.length))} $rows={g.rows}>
                  {rows.flatMap((row) =>
                    row.map((name, c) => (
                      <IconButton key={name} aria-label={name} $col={c + 1}>{ribbonIcons[name]}</IconButton>
                    ))
                  )}
                </IconGrid>
              ))}
            </GroupBody>
            <GroupTitle>
              {g.name}
              <svg width="10" height="10" aria-hidden="true"><path d="M5 0v9M1 5h8M3 6l2 3 2-3" stroke="#9a9a9a" strokeWidth="2" fill="none" /></svg>
            </GroupTitle>
          </Group>
        ))}
      </Ribbon>
      <Toolbar>
        <Tool $w={28} aria-label="Open file">{tools.open}</Tool>
        <Tool $w={41} aria-label="Save file">{tools.save}</Tool>
        <Divider />
        <ZoomBox>
          <ZoomSelect aria-label="Zoom" defaultValue="77%"><option>77%</option></ZoomSelect>
          <svg width="10" height="6" aria-hidden="true"><path d="M1 1l4 4 4-4" fill="none" stroke="#444" /></svg>
        </ZoomBox>
        <Tool $w={40} aria-label="Zoom extents">{tools.extents}</Tool>
        <Tool $w={10} aria-label="Zoom options">{tools.caret}</Tool>
        <Tool $w={42} aria-label="Named views">{tools.eye}</Tool>
        <Tool $w={8} aria-label="View options">{tools.caret}</Tool>
        <Tool $w={42} aria-label="Sketch">{tools.sketch}</Tool>
        <Spacer />
        <Tool $w={36} aria-label="No preview">{tools.noPreview}</Tool>
        <Tool $w={36} aria-label="Wireframe preview">{tools.wirePreview}</Tool>
        <Tool $active aria-label="Shaded preview">{tools.shaded}</Tool>
        <Divider $gap={8} />
        <Tool aria-label="Preview selected only">{tools.selected}</Tool>
        <Tool aria-label="Document preview">{tools.sphere}</Tool>
        <Divider $gap={2} />
        <Tool $w={32} aria-label="Preview quality">{tools.gem}</Tool>
        <Tool $w={10} aria-label="Quality options">{tools.caret}</Tool>
      </Toolbar>
      <Canvas>
        <Wires aria-hidden="true">
          <g transform={`translate(${-ORIGIN.x} ${-ORIGIN.y})`} fill="none">
            <path d={gridLines()} stroke="#bab7ae" />
            {wires.map((d, i) => <path key={i} d={d} stroke={WIRE} strokeWidth="2.300" />)}
          </g>
        </Wires>
        {nodes.map((n, i) => <Node key={i} {...n} />)}
        {sliders.map((s, i) => <Slider key={i} {...s} />)}
        {notes.map((n, i) => <Note key={i} {...n} />)}
        {toggles.map((t, i) => <Toggle key={i} {...t} />)}
        <ParamBox $x={24} $y={714} $w={40} $h={20}>
          <Port $side="in" />
          <svg width="20" height="18" viewBox="0 0 32 30" aria-hidden="true">
            <path d="M9 1h14l8 14-8 14H9L1 15z" fill="#111" />
            <HexText size={24}>7</HexText>
          </svg>
          <Port $side="out" />
        </ParamBox>
        <ListBox $x={1599} $y={622} $w={319} $h={17}>
          <ListName>Honeybee_HVACSystemsList</ListName>
          <ListSelect defaultValue="ideal"><option value="ideal">0. Ideal Air Loads</option></ListSelect>
        </ListBox>
        <CornerTab $x={1} $y={968} $w={10} $h={34} />
        <Compass width="68" height="62" viewBox="0 0 68 62" aria-hidden="true">
          <g transform="translate(38 31)">
            <circle r="27" fill="none" stroke="#000" strokeWidth="4" strokeDasharray="32 8 30 6 24 10 36 24" transform="rotate(-55)" />
            <circle r="25" fill="url(#knob)" stroke="#222" strokeWidth="1" />
            <circle r="23.500" fill="none" stroke="#fff" strokeWidth="2" />
            {[15, 105, 195, 285].map((a) => <path key={a} d="M-4-23h8L0-16z" fill="#fff" transform={`rotate(${a})`} />)}
            <path d="M-37-10l6-4 5 4-5 6z" fill="#000" />
          </g>
        </Compass>
      </Canvas>
      <StatusBar>
        <svg width="20" height="20" viewBox="0 0 20 20" aria-hidden="true">
          <circle cx="10" cy="10" r="9" fill="#1c5fb4" stroke="#0c2c6c" strokeWidth="1.500" />
          <path d="M7.500 4h5l-1 8h-3zM8.500 14h3v2.500h-3z" fill="#2c8ae0" stroke="#e8f4ff" />
        </svg>
        <span>Autosave complete (170 seconds ago)</span>
        <Version>1.0.0007</Version>
      </StatusBar>
      <Taskbar>
        <TaskButton $w={60} aria-label="Start"><svg width="20" height="20" viewBox="0 0 20 20"><path d="M0 3l8-1v8H0zM9 1.800L20 0v10H9zM0 11h8v7.500l-8-1zM9 11h11v9L9 18.500z" fill="#fff" /></svg></TaskButton>
        <Search>
          <svg width="22" height="22" viewBox="0 0 22 22" aria-hidden="true"><circle cx="13.500" cy="8" r="6.500" fill="none" stroke="#222" strokeWidth="1.500" /><path d="M9 13l-8 8" stroke="#222" strokeWidth="1.500" /></svg>
          <SearchInput placeholder="Type here to search" />
        </Search>
        <TaskButton $w={60} aria-label="Cortana"><svg width="22" height="22"><circle cx="11" cy="11" r="8.500" fill="none" stroke="#fff" strokeWidth="2.500" /></svg></TaskButton>
        <TaskButton $w={60} aria-label="Task view"><svg width="22" height="20" viewBox="0 0 22 20"><path d="M.5 0v2.500h12V0M.5 6h12v8H.5zM.5 20v-2.500h12V20M18.500 0v4M18.500 11v9" fill="none" stroke="#fff" strokeWidth="1.300" /><path d="M17 6h3v3h-3z" fill="#fff" /></svg></TaskButton>
        <TaskButton $gap={3} aria-label="Edge">
          <svg width="31" height="31" viewBox="0 0 32 32"><circle cx="16" cy="16" r="16" fill="url(#edge)" /><path d="M0 17Q3 9 12 9q9 0 9 8-2-3-6-1-5 4 0 10 6 5 14 0-5 7-14 6Q1 30 0 17z" fill="#1466bb" /><path d="M18 15q4 0 3 4-1 3 4 3 6-1 7-5-1 8-8 9-10 0-9-7 1-3 3-4z" fill="#262626" /></svg>
        </TaskButton>
        <TaskButton aria-label="Store">
          <svg width="30" height="30" viewBox="0 0 30 30"><path d="M8 9V2h14v7" fill="none" stroke="#f2f2f2" strokeWidth="2.500" /><path d="M0 8h30v21H0z" fill="#f2f2f2" /><path d="M9 14h5v5H9z" fill="#f25022" /><path d="M15 14h5v5h-5z" fill="#7fba00" /><path d="M9 20h5v5H9z" fill="#00a4ef" /><path d="M15 20h5v5h-5z" fill="#ffb900" /></svg>
        </TaskButton>
        <TaskButton $active aria-label="Rhinoceros 6">
          <svg width="30" height="30" viewBox="0 0 30 30"><path d="M0 0h30v30H0z" fill="#0a0a0a" /><path d="M4 0h7q-3 6-8 13-1-6 1-13zM0 13l3-2q2 5 9 6l5 6 8-5 5-2q-2 6-8 8l-4 5Q8 26 0 15z" fill="#f4f4f4" /><path d="M5 15l6 7M14 13l2 5" stroke="#888" /><text x="25" y="13" fontSize="15" fill="#ddd" textAnchor="middle" fontFamily="Open Sans, sans-serif">6</text></svg>
        </TaskButton>
        <TaskButton aria-label="Mail">
          <svg width="30" height="30" viewBox="0 0 30 30"><path d="M0 11L15 1l15 10v4H0z" fill="#0f6cbd" /><path d="M2 11h26L15 22z" fill="#f2f2f2" /><path d="M0 11l15 10 15-10v18H0z" fill="#2bb0f2" /><path d="M0 29l15-8 15 8z" fill="#1c98e0" /><path d="M2 11h26l-13 8.500z" fill="#f2f2f2" /></svg>
        </TaskButton>
        <TaskButton aria-label="Chrome">
          <svg width="28" height="28" viewBox="0 0 28 28"><circle cx="14" cy="14" r="14" fill="#fcc934" /><path d="M14 14L1.900 7A14 14 0 0 1 26.100 7z" fill="#dd4b3e" /><path d="M14 14L1.900 7A14 14 0 0 0 14 28l5-9z" fill="#1fa05c" /><path d="M14 8h12.500" stroke="#dd4b3e" strokeWidth="3" /><circle cx="14" cy="14" r="6.500" fill="#fff" /><circle cx="14" cy="14" r="5" fill="#4b88ef" /></svg>
          <RunningMark />
        </TaskButton>
        <Spacer />
        <TaskButton $w={28} aria-label="Show hidden icons"><svg width="16" height="9"><path d="M1 8l7-7 7 7" fill="none" stroke="#fff" strokeWidth="1.500" /></svg></TaskButton>
        <TaskButton $w={30} aria-label="Volume"><svg width="18" height="14"><path d="M.5 4.500h3l4-4v13l-4-4h-3zM11 4l6 6M17 4l-6 6" fill="none" stroke="#fff" strokeWidth="1.200" /></svg></TaskButton>
        <TaskButton $w={31} aria-label="Dropbox"><svg width="18" height="17" viewBox="0 0 18 17"><path d="M4.500 0L9 3 4.500 6 0 3zM13.500 0L18 3l-4.500 3L9 3zM4.500 6L9 9l-4.500 3L0 9zM13.500 6L18 9l-4.500 3L9 9zM9 10.500l4 3L9 16.500l-4-3z" fill="#fff" /></svg></TaskButton>
        <TaskButton $w={31} aria-label="Network"><svg width="16" height="16" viewBox="0 0 16 16"><path d="M1 15Q1 2 15 1M5 15Q5 6 15 5M9 15q0-5 6-6" fill="none" stroke="#e8e8e8" strokeWidth="1.200" /><circle cx="13.500" cy="13.500" r="1.600" fill="#fff" /></svg></TaskButton>
        <TrayText $w={36} $gap={4}>
          <span>فا</span>
          <span>FA</span>
        </TrayText>
        <TrayText $w={84} $gap={5}>
          <span>1:34 PM</span>
          <span>11/5/2020</span>
        </TrayText>
        <NoticeButton aria-label="Notifications">
          <svg width="32" height="34" viewBox="0 0 32 34"><path d="M2 3h20v15H10l-4 4v-4H2z" fill="#fff" /><path d="M5 7h14M5 10.500h14M5 14h9" stroke="#262626" strokeWidth="1.400" /><circle cx="21" cy="22" r="10" fill="#3a3a3a" stroke="#999" /><text x="21" y="27" fontSize="13" fill="#fff" textAnchor="middle" fontFamily="Open Sans, sans-serif">1</text></svg>
        </NoticeButton>
        <ShowDesktop aria-label="Show desktop" />
      </Taskbar>
    </Window>
  );
}
